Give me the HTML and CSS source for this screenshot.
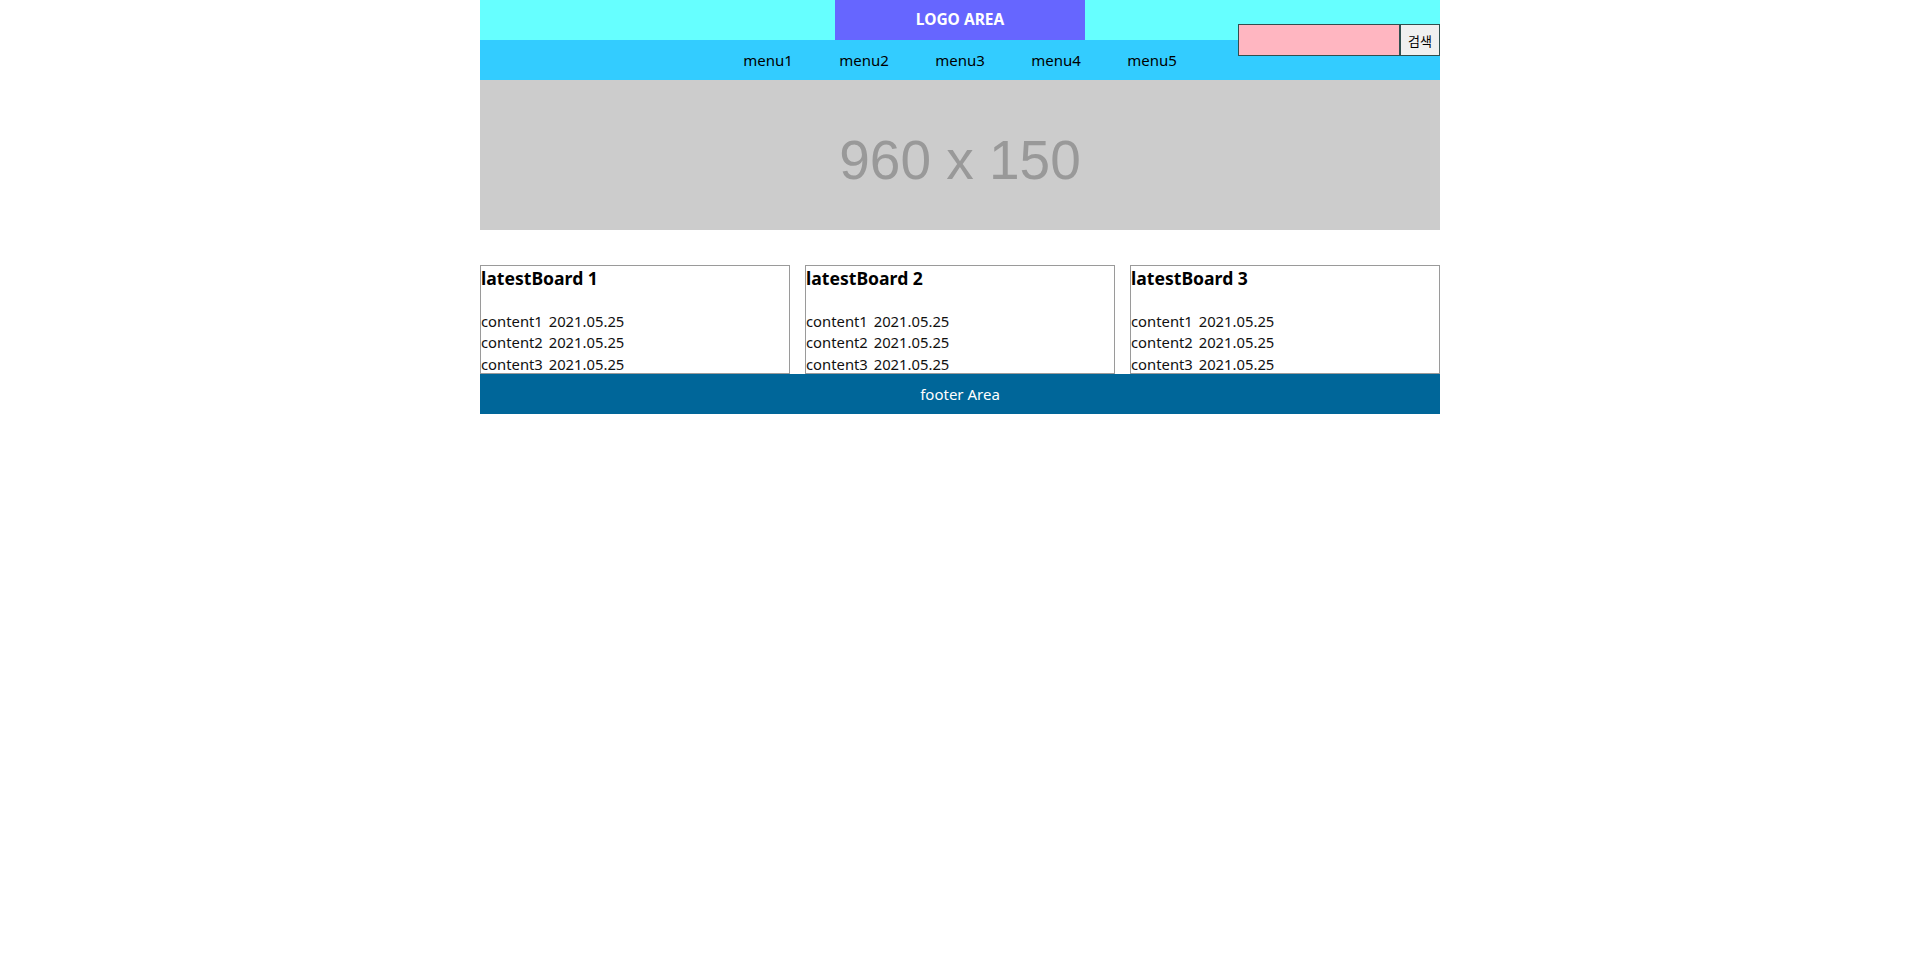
FILE: index.html
```html
<!DOCTYPE html>
<html lang="ko">
<head>
<meta charset="utf-8">
<title>Layout</title>
<link rel="stylesheet" href="styles.css">
</head>
<body>
<div class="wrap">
  <header class="header">
    <div class="logo">LOGO AREA</div>
    <form class="search">
      <input class="search-input" type="text">
      <button class="search-btn" type="button">검색</button>
    </form>
  </header>
  <nav class="nav">
    <ul class="menu">
      <li class="menu-item">menu1</li>
      <li class="menu-item">menu2</li>
      <li class="menu-item">menu3</li>
      <li class="menu-item">menu4</li>
      <li class="menu-item">menu5</li>
    </ul>
  </nav>
  <div class="banner">960 x 150</div>
  <section class="boards">
    <div class="board">
      <h3 class="board-title">latestBoard 1</h3>
      <ul class="board-list">
        <li>content1 <span class="date">2021.05.25</span></li>
        <li>content2 <span class="date">2021.05.25</span></li>
        <li>content3 <span class="date">2021.05.25</span></li>
      </ul>
    </div>
    <div class="board">
      <h3 class="board-title">latestBoard 2</h3>
      <ul class="board-list">
        <li>content1 <span class="date">2021.05.25</span></li>
        <li>content2 <span class="date">2021.05.25</span></li>
        <li>content3 <span class="date">2021.05.25</span></li>
      </ul>
    </div>
    <div class="board">
      <h3 class="board-title">latestBoard 3</h3>
      <ul class="board-list">
        <li>content1 <span class="date">2021.05.25</span></li>
        <li>content2 <span class="date">2021.05.25</span></li>
        <li>content3 <span class="date">2021.05.25</span></li>
      </ul>
    </div>
  </section>
  <footer class="footer">footer Area</footer>
</div>
</body>
</html>
```

FILE: styles.css
```css
* { box-sizing: border-box; }
html, body { margin: 0; padding: 0; background: #fff; }
body {
  font-family: "Noto Sans", "Noto Sans CJK KR", sans-serif;
  font-size: 15px;
  color: #000;
}
.wrap {
  width: 960px;
  margin: 0 auto;
  position: relative;
}
.header {
  height: 40px;
  background: #66ffff;
  display: flex;
  justify-content: center;
}
.logo {
  width: 250px;
  height: 40px;
  line-height: 38px;
  background: #6666ff;
  color: #fff;
  font-weight: bold;
  text-align: center;
  font-size: 15.5px;
}
.search {
  position: absolute;
  top: 24px;
  right: 0;
  display: flex;
  margin: 0;
  z-index: 2;
}
.search-input {
  width: 162px;
  height: 32px;
  margin: 0;
  padding: 0 4px;
  border: 1px solid #2f4f4f;
  background: #ffb6c1;
  outline: none;
}
.search-btn {
  width: 40px;
  height: 32px;
  margin: 0;
  padding: 0;
  border: 1px solid #2f4f4f;
  background: #f0f0f0;
  font-family: "Noto Sans CJK KR", sans-serif;
  font-size: 13px;
  color: #000;
}
.nav {
  height: 40px;
  background: #33ccff;
}
.menu {
  list-style: none;
  margin: 0;
  padding: 0;
  display: flex;
  justify-content: center;
}
.menu-item {
  width: 96px;
  height: 40px;
  line-height: 40px;
  text-align: center;
  font-size: 15px;
}
.banner {
  height: 150px;
  background: #cccccc;
  color: #999999;
  font-family: "Liberation Sans", Arial, sans-serif;
  font-size: 55px;
  text-align: center;
  padding-top: 11px;
  line-height: 139px;
}
.boards {
  margin-top: 35px;
  display: flex;
  gap: 15px;
}
.board {
  width: 310px;
  height: 109px;
  border: 1px solid #9a9a9a;
  overflow: hidden;
}
.board-title {
  margin: 0 0 21px;
  font-size: 17.6px;
  line-height: 24px;
  font-weight: bold;
}
.board-list {
  list-style: none;
  margin: 0;
  padding: 0;
}
.board-list li {
  line-height: 21.3px;
  font-size: 14.8px;
  color: #111;
}
.date {
  margin-left: 2px;
}
.footer {
  height: 40px;
  line-height: 40px;
  background: #006699;
  color: #fff;
  text-align: center;
  font-size: 15px;
}
```
